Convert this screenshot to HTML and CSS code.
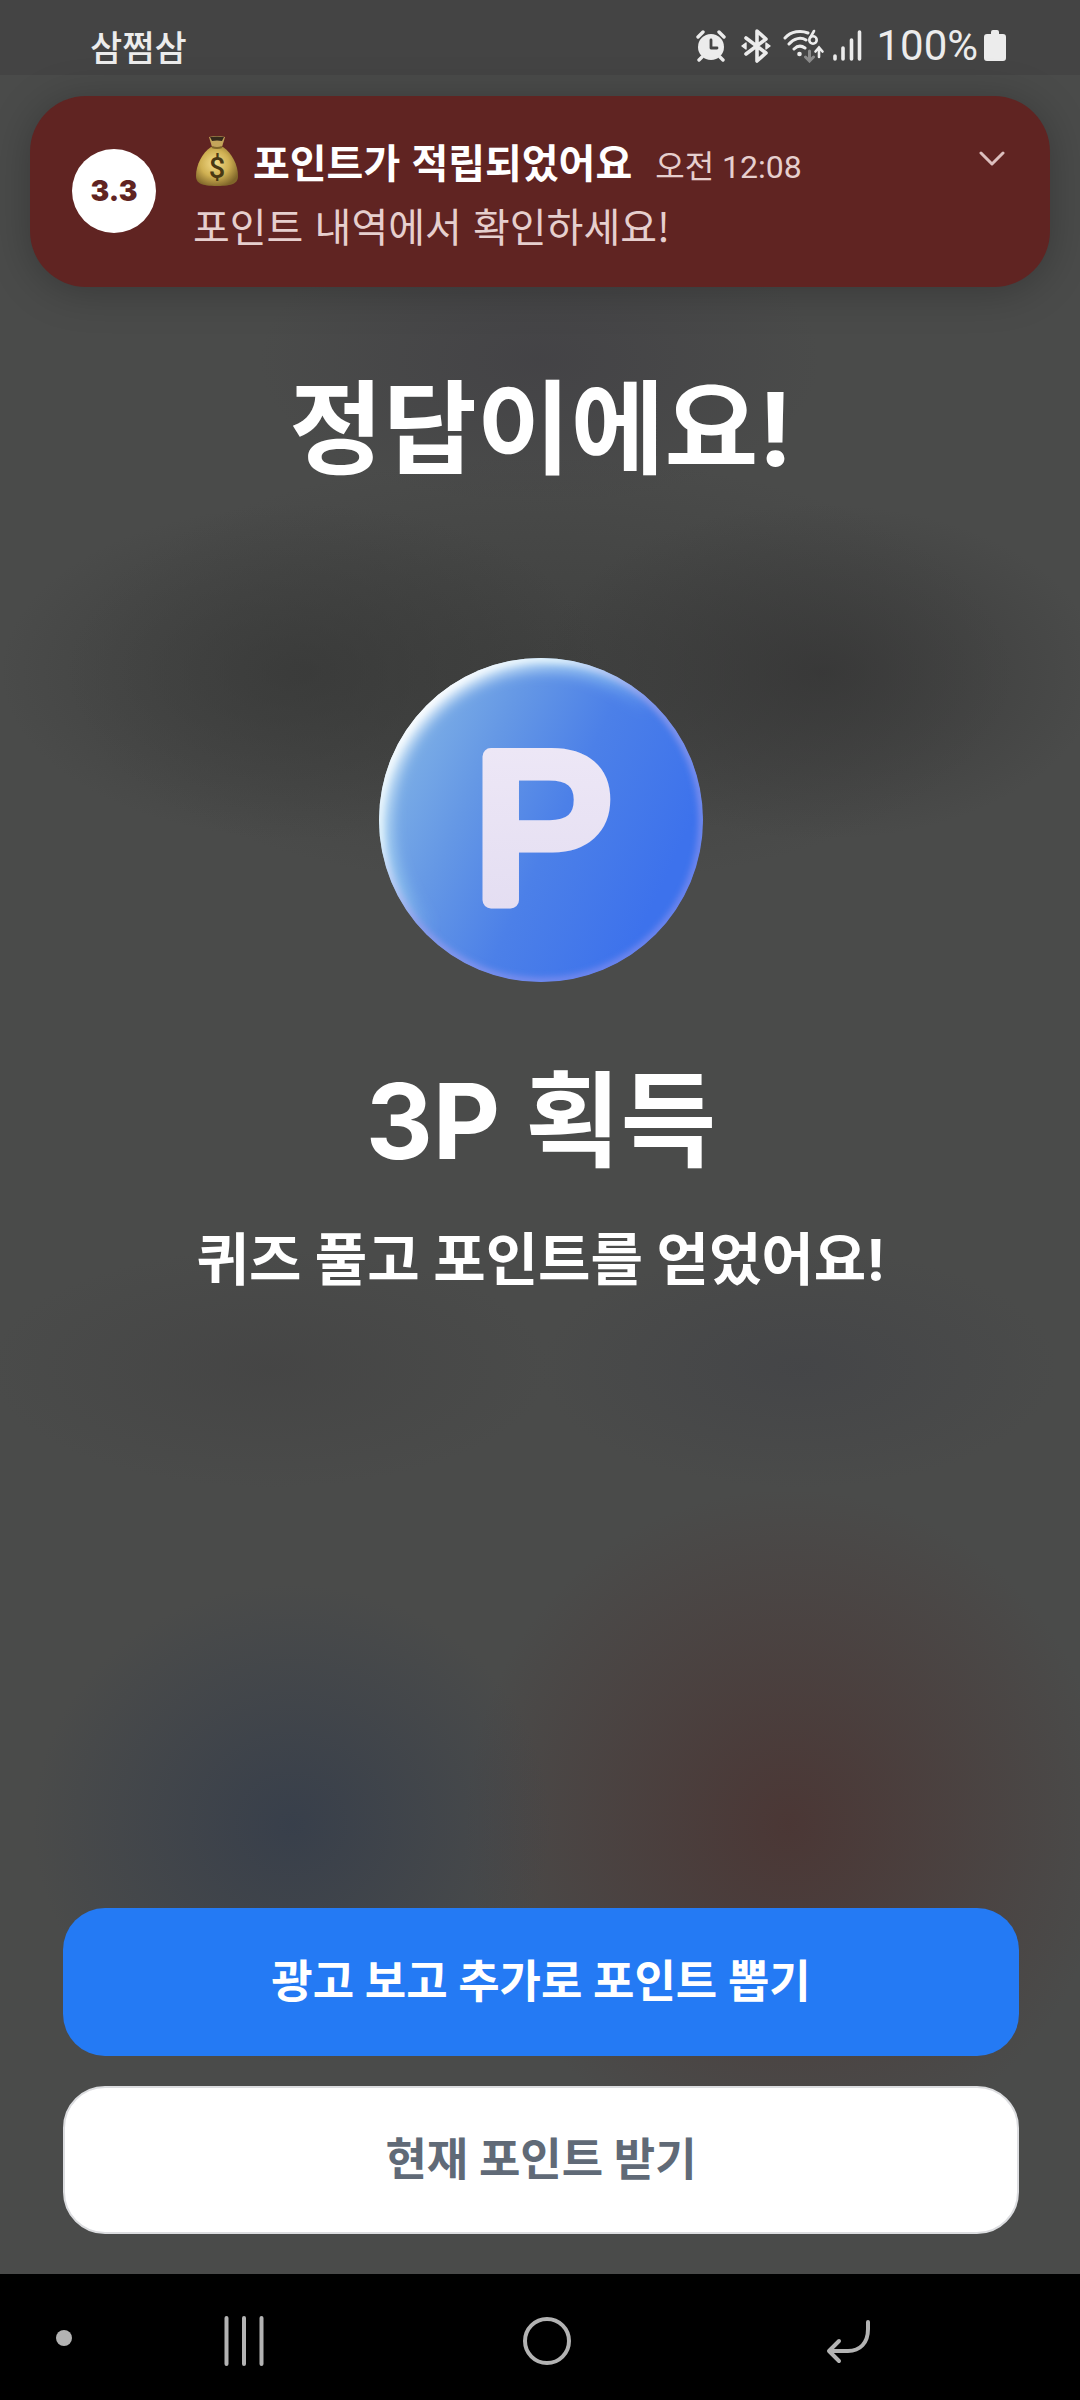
FILE: index.html
```html
<!DOCTYPE html>
<html lang="ko">
<head>
<meta charset="utf-8">
<meta name="viewport" content="width=device-width, initial-scale=1">
<title>정답이에요!</title>
<link rel="stylesheet" href="styles.css">
</head>
<body>
<div class="screen">
  <header class="status">
    <span class="status-carrier">삼쩜삼</span>
    <div class="status-icons">
      <svg class="icon-alarm" width="30" height="32" viewBox="0 0 30 32" aria-label="알람">
        <circle cx="15" cy="17" r="13" fill="#ececec"/>
        <path d="M2 7l5-5M28 7l-5-5M6 27l-3 3M24 27l3 3" stroke="#ececec" stroke-width="3.4" stroke-linecap="round"/>
        <path d="M15 10v8h6" fill="none" stroke="#444" stroke-width="2.8" stroke-linecap="round" stroke-linejoin="round"/>
      </svg>
      <svg class="icon-bluetooth" width="30" height="34" viewBox="0 0 30 34" aria-label="블루투스">
        <path d="M5 9l20 15-9 8V2l9 8L5 25" fill="none" stroke="#ececec" stroke-width="3.6" stroke-linecap="round" stroke-linejoin="round"/>
        <path d="M1 17l4-3v6zM29 17l-4-3v6z" fill="#ececec" stroke="#ececec" stroke-width="1.4" stroke-linejoin="round"/>
      </svg>
      <svg class="icon-wifi" width="42" height="34" viewBox="0 0 42 34" aria-label="와이파이 6">
        <g fill="none" stroke="#ececec" stroke-width="3" stroke-linecap="round">
          <path d="M2 9C8 2 18 1 25 4M6 15c5-6 12-7 17-4M11 20c3-3 7-4 11-1"/>
          <circle cx="30" cy="11" r="3.700" stroke-width="2.6"/>
          <path d="M27 9l4-7" stroke-width="2.6"/>
          <path d="M36 28V19M32.500 22.500l3.500-4 3.500 4" stroke-width="2.6"/>
        </g>
        <circle cx="16.500" cy="25" r="2.300" fill="#ececec"/>
        <path d="M26.500 22v9M22.500 28l4 4 4-4" fill="none" stroke="#8b8b8b" stroke-width="3" stroke-linecap="round"/>
      </svg>
      <svg class="icon-signal" width="29" height="31" viewBox="0 0 29 31" aria-label="신호 강도">
        <path d="M2 26v3M10 18v11M18.500 10v19M26.500 2v27" stroke="#ececec" stroke-width="3.6" stroke-linecap="round"/>
      </svg>
      <span class="status-level">100%</span>
      <svg class="icon-battery" width="22" height="32" viewBox="0 0 22 32" aria-label="배터리">
        <path d="M7 4V2q0-2 2-2h4q2 0 2 2v2h4q3 0 3 3v21q0 3-3 3H3q-3 0-3-3V7q0-3 3-3z" fill="#ececec"/>
      </svg>
    </div>
  </header>

  <section class="notice" aria-label="알림">
    <span class="notice-logo">3.3</span>
    <div class="notice-text">
      <div class="notice-head">
        <svg class="notice-bag" width="44" height="52" viewBox="0 0 44 52" role="img" aria-label="돈주머니">
          <defs>
            <radialGradient id="bag" cx="45%" cy="42%" r="62%">
              <stop offset="0" stop-color="#f4dc8b"/>
              <stop offset=".55" stop-color="#cfb052"/>
              <stop offset="1" stop-color="#80662a"/>
            </radialGradient>
          </defs>
          <path d="M16 11C7 17 1 29 1 40c0 7 5 10 21 10s21-3 21-10C43 29 37 17 28 11z" fill="url(#bag)"/>
          <path d="M14 1q8-2 16 0l-3 10H17z" fill="#c4a55b"/>
          <path d="M15 1q7-1 14 0l-2 4q-5-1-10 0z" fill="#35291b"/>
          <path d="M17 11q5 2 10 0" fill="none" stroke="#80662a" stroke-width="2"/>
          <text class="bag-sign" x="22" y="42" text-anchor="middle">$</text>
        </svg>
        <strong class="notice-title">포인트가 적립되었어요</strong>
        <time class="notice-time">오전 12:08</time>
      </div>
      <p class="notice-body">포인트 내역에서 확인하세요!</p>
    </div>
    <button class="notice-toggle" type="button" aria-label="펼치기">
      <svg width="26" height="16" viewBox="0 0 26 16"><path d="M2 2l11 11L24 2" fill="none" stroke="#dcbfbe" stroke-width="3" stroke-linecap="round" stroke-linejoin="round"/></svg>
    </button>
  </section>

  <main class="result">
    <h1 class="result-title">정답이에요!</h1>
    <svg class="coin" width="326" height="326" viewBox="0 0 326 326" role="img" aria-label="포인트">
      <defs>
        <linearGradient id="face" x1=".05" y1=".25" x2=".9" y2=".65">
          <stop offset="0" stop-color="#80b2e6"/>
          <stop offset=".3" stop-color="#6598e5"/>
          <stop offset=".6" stop-color="#4c80e8"/>
          <stop offset="1" stop-color="#3d72ec"/>
        </linearGradient>
        <linearGradient id="rim" x1=".1" y1=".15" x2=".8" y2=".85">
          <stop offset="0" stop-color="#fff"/>
          <stop offset=".22" stop-color="#e4f4fc"/>
          <stop offset=".5" stop-color="#8e9cec"/>
          <stop offset="1" stop-color="#7287ee"/>
        </linearGradient>
        <linearGradient id="shine" x1=".12" y1=".12" x2=".5" y2=".5">
          <stop offset="0" stop-color="#fff"/>
          <stop offset=".7" stop-color="#a8dcf5" stop-opacity=".5"/>
          <stop offset="1" stop-color="#a8dcf5" stop-opacity="0"/>
        </linearGradient>
        <linearGradient id="letter" x1="0" y1="0" x2="0" y2="1">
          <stop offset="0" stop-color="#efe9f7"/>
          <stop offset="1" stop-color="#e2dcf1"/>
        </linearGradient>
        <filter id="soft" x="-10%" y="-10%" width="120%" height="120%"><feGaussianBlur stdDeviation="7"/></filter>
        <filter id="edge" x="-10%" y="-10%" width="120%" height="120%"><feGaussianBlur stdDeviation="3"/></filter>
        <clipPath id="disc"><circle cx="163" cy="163" r="162"/></clipPath>
      </defs>
      <g clip-path="url(#disc)">
        <circle cx="163" cy="163" r="162" fill="url(#face)"/>
        <circle cx="163" cy="163" r="160" fill="none" stroke="url(#shine)" stroke-width="20" filter="url(#soft)"/>
        <circle cx="163" cy="163" r="162" fill="none" stroke="url(#rim)" stroke-width="8" filter="url(#edge)"/>
      </g>
      <text class="coin-letter" x="96" y="243" fill="url(#letter)" stroke="url(#letter)">P</text>
    </svg>
    <h2 class="result-points">3P 획득</h2>
    <p class="result-note">퀴즈 풀고 포인트를 얻었어요!</p>
    <div class="actions">
      <button class="action action-primary" type="button">광고 보고 추가로 포인트 뽑기</button>
      <button class="action action-plain" type="button">현재 포인트 받기</button>
    </div>
  </main>

  <nav class="navbar" aria-label="시스템 탐색">
    <span class="nav-dot"></span>
    <button class="nav-button" type="button" aria-label="최근 앱">
      <svg width="50" height="50" viewBox="0 0 50 50"><path d="M7.500 2v46M25 2v46M42.500 2v46" stroke="#b3b3b3" stroke-width="4" stroke-linecap="round"/></svg>
    </button>
    <button class="nav-button" type="button" aria-label="홈">
      <svg width="50" height="50" viewBox="0 0 50 50"><circle cx="25" cy="25" r="22" fill="none" stroke="#b3b3b3" stroke-width="4"/></svg>
    </button>
    <button class="nav-button" type="button" aria-label="뒤로">
      <svg width="50" height="50" viewBox="0 0 50 50"><path d="M44 6v7c0 14-8 22-20 22H6M15 25L5 35l10 10" fill="none" stroke="#b3b3b3" stroke-width="4" stroke-linecap="round" stroke-linejoin="round"/></svg>
    </button>
  </nav>
</div>
</body>
</html>
```

FILE: styles.css
```css
* {
  box-sizing: border-box;
}

body {
  margin: 0;
  background: #000;
  color: #fff;
  font-family: "Noto Sans CJK KR", sans-serif;
}

button {
  margin: 0;
  padding: 0;
  border: 0;
  background: none;
  color: inherit;
  font: inherit;
}

h1,
h2,
p {
  margin: 0;
}

svg {
  display: block;
  flex: none;
}

.screen {
  display: flex;
  flex-direction: column;
  min-height: 100vh;
  background:
    radial-gradient(26% 7% at 76% 28%, rgba(52, 52, 52, .75), rgba(52, 52, 52, 0)),
    radial-gradient(28% 7% at 28% 28%, rgba(54, 55, 54, .7), rgba(54, 55, 54, 0)),
    radial-gradient(44% 9% at 50% 28%, rgba(56, 57, 56, .6), rgba(56, 57, 56, 0)),
    radial-gradient(26% 6% at 50% 15%, rgba(66, 65, 69, .8), rgba(66, 65, 69, 0)),
    radial-gradient(26% 5% at 25% 57%, rgba(67, 67, 67, .7), rgba(67, 67, 67, 0)),
    radial-gradient(24% 5% at 74% 57%, rgba(67, 68, 71, .8), rgba(67, 68, 71, 0)),
    radial-gradient(24% 10% at 27% 76%, rgba(54, 62, 75, .9), rgba(62, 67, 75, 0)),
    radial-gradient(30% 14% at 73% 76%, rgba(75, 53, 51, .9), rgba(75, 62, 60, 0)),
    #4a4b4a;
}

.status {
  display: flex;
  align-items: center;
  justify-content: space-between;
  height: 75px;
  padding: 16px 74px 0 90px;
  background: #444;
  color: #ececec;
}

.status-carrier {
  font-size: 35px;
  font-weight: 500;
  line-height: 56px;
}

.status-icons {
  display: flex;
  align-items: center;
}

.icon-bluetooth {
  margin-left: 15px;
}

.icon-wifi {
  margin-left: 12px;
}

.icon-signal {
  margin-left: 8px;
}

.status-level {
  margin-left: 14px;
  font: 400 42px/58px Roboto, sans-serif;
}

.icon-battery {
  margin-left: 6px;
}

.notice {
  display: flex;
  align-items: flex-start;
  min-height: 191px;
  margin: 21px 30px 0;
  padding: 36px 45px 28px 42px;
  border-radius: 56px;
  background: #602422;
  box-shadow: 0 4px 40px rgba(0, 0, 0, .25);
}

.notice-logo {
  flex: none;
  width: 84px;
  height: 84px;
  margin-top: 17px;
  border-radius: 50%;
  background: #fff;
  color: #602422;
  font: 900 28px/84px Inter, sans-serif;
  text-align: center;
}

.notice-text {
  flex: 1;
  margin-left: 37px;
}

.notice-head {
  display: flex;
  align-items: baseline;
  height: 60px;
}

.notice-bag {
  align-self: center;
  margin-left: 2px;
}

.bag-sign {
  fill: #493813;
  font: 500 29px Roboto, sans-serif;
}

.notice-title {
  margin-left: 14px;
  font-size: 40px;
  font-weight: 700;
  line-height: 58px;
}

.notice-time {
  margin-left: 23px;
  color: #e6cfce;
  font-family: Roboto, "Noto Sans CJK KR", sans-serif;
  font-size: 32px;
  line-height: 58px;
}

.notice-body {
  color: #e6cfce;
  font-size: 40px;
  line-height: 66px;
}

.notice-toggle {
  margin-top: 19px;
}

.result {
  display: flex;
  flex: 1;
  flex-direction: column;
  align-items: center;
  padding: 82px 61px 40px 63px;
  font-family: Inter, "Noto Sans CJK KR", sans-serif;
  font-weight: 700;
  text-align: center;
}

.result-title {
  font-size: 102px;
  line-height: 120px;
}

.coin {
  margin-top: 168px;
}

.coin-letter {
  font: 400 208px "Liberation Sans", sans-serif;
  stroke-width: 17px;
  stroke-linejoin: round;
}

.result-points {
  margin-top: 78px;
  font-size: 104px;
  line-height: 120px;
}

.result-note {
  margin-top: 43px;
  font-size: 57px;
  line-height: 72px;
}

.actions {
  display: flex;
  flex-direction: column;
  gap: 30px;
  width: 100%;
  margin-top: auto;
}

.action {
  height: 148px;
  border-radius: 42px;
  font-size: 45px;
  font-weight: 700;
  line-height: 60px;
}

.action-primary {
  background: #247af4;
}

.action-plain {
  border: 2px solid #dcdde0;
  background: #fff;
  color: #606a77;
}

.navbar {
  display: flex;
  align-items: center;
  height: 126px;
  padding: 8px 206px 0 56px;
  background: #000;
}

.nav-dot {
  width: 16px;
  height: 16px;
  margin-right: 147px;
  margin-bottom: 6px;
  border-radius: 50%;
  background: #b3b3b3;
}

.nav-button + .nav-button {
  margin-left: auto;
}
```
